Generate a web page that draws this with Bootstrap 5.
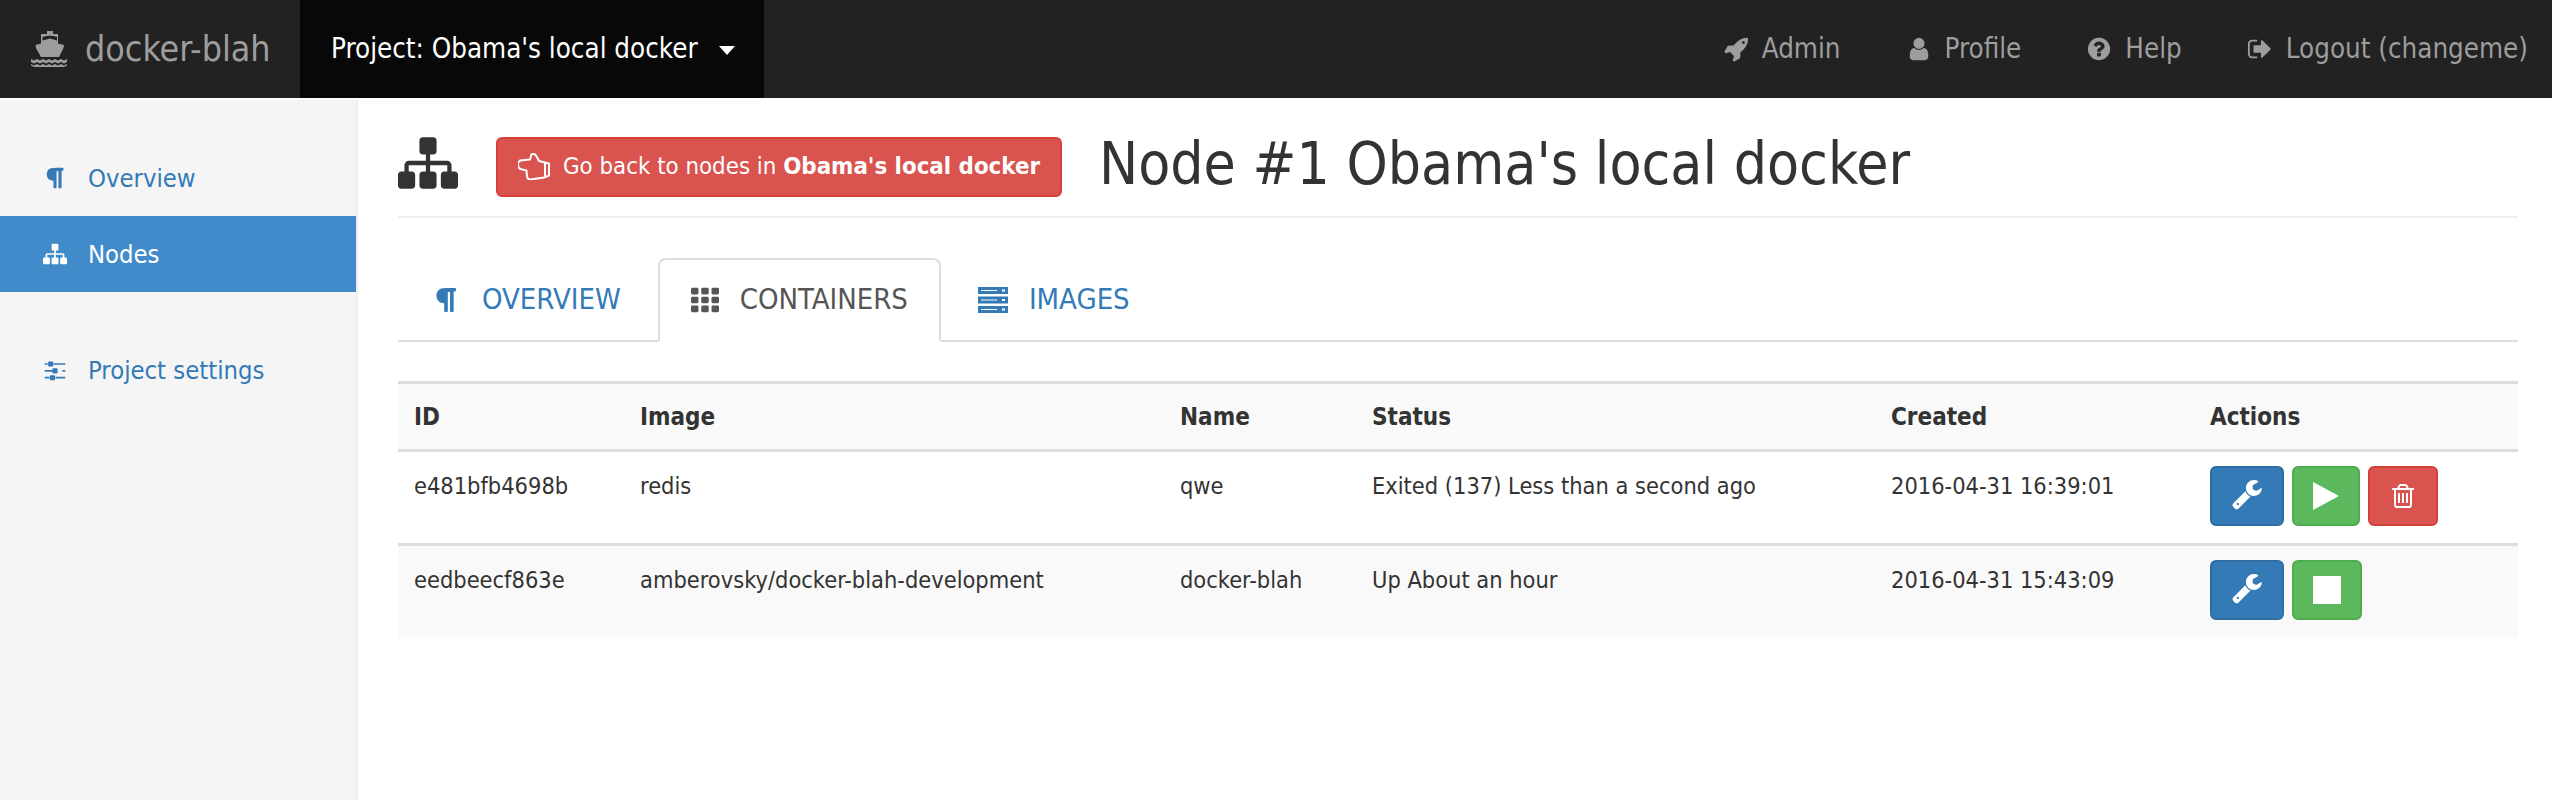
<!DOCTYPE html>
<html lang="en">
<head>
  <meta charset="UTF-8" />
  <title>docker-blah</title>
  <link href="https://cdn.jsdelivr.net/npm/bootstrap@5.3.3/dist/css/bootstrap.min.css" rel="stylesheet" />
  <style>
    body { font-family: "DejaVu Sans Condensed", "DejaVu Sans", Verdana, sans-serif; font-size: 23.4px; color: #333; background: #fff; }
    a { text-decoration: none; color: #337ab7; }
    svg { fill: currentColor; flex: none; }

    /* top bar */
    .topbar { height: 98px; background: #222; color: #9d9d9d; }
    .topbar a { color: #9d9d9d; }
    .brand-link { width: 300px; padding-left: 30px; font-size: 35.5px; gap: 15px; }
    .project-link { width: 464px; padding-left: 31px; background: #080808; font-size: 27.5px; }
    .topbar .project-link { color: #fff; }
    .project-caret { margin-left: 21px; border-top: 9px solid #fff; border-left: 8px solid transparent; border-right: 8px solid transparent; margin-top: 3px; }
    .top-links { gap: 65px; padding-right: 24px; font-size: 27.5px; }
    .top-links a { gap: 13px; }

    /* sidebar */
    .page-wrap { margin-top: 2px; min-height: 700px; }
    .side-col { width: 358px; background: #f5f5f5; border-right: 2px solid #eee; padding-top: 40px; }
    .side-item { height: 76px; padding-left: 43px; gap: 21px; font-size: 25.4px; }
    .side-item.is-current { background: #428bca; color: #fff; width: 356px; margin-right: -2px; }
    .side-gap { height: 40px; }

    /* content */
    .content-col { padding: 36px 34px 0 40px; min-width: 0; }
    .head-row { height: 82px; border-bottom: 2px solid #eee; padding-bottom: 19px; }
    .head-icon { margin-bottom: 8px; }
    .back-btn { background: #d9534f; border: 2px solid #d43f3a; border-radius: 6px; color: #fff; width: 566px; height: 60px; margin-left: 38px; gap: 12px; padding: 0 0 0 20px; font-size: 23.8px; white-space: nowrap; }
    .node-title { font-size: 58.3px; font-weight: 400; margin: 0 0 5px 37px; white-space: nowrap; line-height: 60px; }

    .tab-row { margin-top: 40px; height: 84px; border-bottom: 2px solid #ddd; margin-bottom: 39px; }
    .tab-link { height: 84px; padding: 0 31px; margin-right: 4px; gap: 21px; font-size: 29px; border: 2px solid transparent; border-radius: 8px 8px 0 0; }
    .tab-link.is-current { color: #555; background: #fff; border-color: #ddd #ddd #fff; }

    .node-table { width: 2120px; border-collapse: collapse; table-layout: fixed; }
    .node-table th, .node-table td { padding: 0 0 0 16px; border-top: 3px solid #ddd; vertical-align: top; }
    .node-table th { height: 68px; vertical-align: middle; font-size: 24px; font-weight: 700; background: #f9f9f9; }
    .node-table td { height: 94px; padding-top: 17px; }
    .node-table tbody tr:last-child td { height: 92px; background: #f9f9f9; }
    .act-btn { height: 60px; border-radius: 6px; border: 2px solid; color: #fff; padding: 0; margin-right: 8px; vertical-align: top; display: inline-flex; align-items: center; justify-content: center; }
    .act-tool { background: #337ab7; border-color: #2e6da4; width: 74px; }
    .act-run { background: #5cb85c; border-color: #4cae4c; width: 68px; }
    .act-stop { background: #5cb85c; border-color: #4cae4c; width: 70px; }
    .act-del { background: #d9534f; border-color: #d43f3a; width: 70px; }
    .node-table td.act-cell { padding-top: 14px; padding-left: 16px; }
  </style>
</head>
<body>

  <svg width="0" height="0" class="position-absolute">
    <defs>
      <symbol id="i-para" viewBox="0 0 1792 1792"><path d="M1534 189v73q0 29-18.500 61t-42.500 32q-50 0-54 1-26 6-32 31-3 11-3 64v1152q0 25-18 43t-43 18h-108q-25 0-43-18t-18-43v-1218h-143v1218q0 25-17.500 43t-43.500 18h-108q-26 0-43.500-18t-17.500-43v-496q-147-12-245-59-126-58-192-179-64-117-64-259 0-166 88-286 88-118 209-159 111-37 417-37h479q25 0 43 18t18 43z"/></symbol>
      <symbol id="i-sitemap" viewBox="0 0 1792 1792"><path d="M1792 1248v320q0 40-28 68t-68 28h-320q-40 0-68-28t-28-68v-320q0-40 28-68t68-28h96v-192h-512v192h96q40 0 68 28t28 68v320q0 40-28 68t-68 28h-320q-40 0-68-28t-28-68v-320q0-40 28-68t68-28h96v-192h-512v192h96q40 0 68 28t28 68v320q0 40-28 68t-68 28h-320q-40 0-68-28t-28-68v-320q0-40 28-68t68-28h96v-192q0-52 38-90t90-38h512v-192h-96q-40 0-68-28t-28-68v-320q0-40 28-68t68-28h320q40 0 68 28t28 68v320q0 40-28 68t-68 28h-96v192h512q52 0 90 38t38 90v192h96q40 0 68 28t28 68z"/></symbol>
      <symbol id="i-sliders" viewBox="0 0 1792 1792"><path d="M480 1408v128h-352v-128h352zm352-128q26 0 45 19t19 45v256q0 26-19 45t-45 19h-256q-26 0-45-19t-19-45v-256q0-26 19-45t45-19h256zm160-384v128h-864v-128h864zm-640-512v128h-224v-128h224zm1312 1024v128h-736v-128h736zm-960-1152q26 0 45 19t19 45v256q0 26-19 45t-45 19h-256q-26 0-45-19t-19-45v-256q0-26 19-45t45-19h256zm320 512q26 0 45 19t19 45v256q0 26-19 45t-45 19h-256q-26 0-45-19t-19-45v-256q0-26 19-45t45-19h256zm640 128v128h-224v-128h224zm0-512v128h-864v-128h864z"/></symbol>
      <symbol id="i-grid" viewBox="0 0 30 30"><rect x="0" y="2" width="8" height="7" rx="1.500"/><rect x="11" y="2" width="8" height="7" rx="1.500"/><rect x="22" y="2" width="8" height="7" rx="1.500"/><rect x="0" y="11.500" width="8" height="7" rx="1.500"/><rect x="11" y="11.500" width="8" height="7" rx="1.500"/><rect x="22" y="11.500" width="8" height="7" rx="1.500"/><rect x="0" y="21" width="8" height="7" rx="1.500"/><rect x="11" y="21" width="8" height="7" rx="1.500"/><rect x="22" y="21" width="8" height="7" rx="1.500"/></symbol>
      <symbol id="i-server" viewBox="0 0 30 26"><path fill-rule="evenodd" d="M0 0h30v7H0zM24 2.500v2h3v-2zM0 9.500h30v7H0zM24 12v2h3v-2zM0 19h30v7H0zM24 21.500v2h3v-2zM3 3v1h16V3zM3 12.500v1h16v-1zM3 22v1h16v-1z"/></symbol>
      <symbol id="i-wrench" viewBox="0 0 1664 1792"><path d="M384 1344q0-26-19-45t-45-19-45 19-19 45 19 45 45 19 45-19 19-45zm644-420l-682 682q-37 37-90 37-52 0-91-37l-106-108q-38-36-38-90 0-53 38-91l681-681q39 98 114.500 173.500t173.500 114.500zm634-435q0 39-23 106-47 134-164.500 217.500t-258.500 83.500q-185 0-316.500-131.500t-131.500-316.500 131.500-316.500 316.500-131.500q58 0 121.500 16.500t107.500 46.500q16 11 16 28t-16 28l-293 169v224l193 107q5-3 79-48.500t135.500-81 70.500-35.500q15 0 23.500 10t8.500 25z"/></symbol>
    </defs>
  </svg>

  <!-- Top bar -->
  <nav class="topbar d-flex align-items-stretch">
    <a class="brand-link d-flex align-items-center" href="#">
      <svg width="40" height="36" viewBox="0 0 40 36"><path fill-rule="evenodd" d="M17 0h6v3h5v9.500l6 1.500-.5 3-4.500 9H11L6 17l-.5-3 5.500-1.500V3h6zM12.500 6v3.500L20 7.500l7 2V6q-7-2.500-14.500 0z"/><path d="M1 28l3 1.500 3-1.500 3 1.500 3-1.500 3 1.500 3-1.500 3 1.500 3-1.500 3 1.500 3-1.500 3 1.500 3-1.500v3l-3 1.500-3-1.500-3 1.500-3-1.500-3 1.500-3-1.500-3 1.500-3-1.500-3 1.500-3-1.500-3 1.500-3-1.500zM1 33l3 1.500 3-1.500 3 1.500 3-1.500 3 1.500 3-1.500 3 1.500 3-1.500 3 1.500 3-1.500 3 1.500 3-1.500v1.500l-3 1.500H4l-3-1.500z"/></svg>
      <span>docker-blah</span>
    </a>
    <a class="project-link d-flex align-items-center text-nowrap" href="#">
      <span>Project: Obama's local docker</span><span class="project-caret"></span>
    </a>
    <div class="top-links d-flex align-items-center ms-auto text-nowrap">
      <a class="d-flex align-items-center" href="#">
        <svg width="26" height="26" viewBox="0 0 1792 1792"><path d="M1504 448q0-40-28-68t-68-28-68 28-28 68 28 68 68 28 68-28 28-68zm224-288q0 249-75.500 430.500t-253.500 360.500q-81 80-195 176l-20 379q-2 16-16 26l-384 224q-7 4-16 4-12 0-23-9l-64-64q-13-14-8-32l85-276-281-281-276 85q-3 1-9 1-14 0-23-9l-64-64q-17-19-5-39l224-384q10-14 26-16l379-20q96-114 176-195 188-187 358-258t431-71q14 0 24 9.500t10 22.500z"/></svg>
        <span>Admin</span>
      </a>
      <a class="d-flex align-items-center" href="#">
        <svg width="26" height="26" viewBox="0 0 1792 1792"><path d="M1536 1399q0 109-62.500 187t-150.500 78h-854q-88 0-150.500-78t-62.500-187q0-85 8.500-160.500t31.500-152 58.500-131 94-89 134.500-34.500q131 128 313 128t313-128q76 0 134.500 34.500t94 89 58.500 131 31.500 152 8.500 160.500zm-256-887q0 159-112.500 271.500t-271.500 112.500-271.500-112.500-112.500-271.500 112.500-271.500 271.500-112.500 271.500 112.500 112.500 271.500z"/></svg>
        <span>Profile</span>
      </a>
      <a class="d-flex align-items-center" href="#">
        <svg width="26" height="26" viewBox="0 0 1792 1792"><path d="M1024 1376v-192q0-14-9-23t-23-9h-192q-14 0-23 9t-9 23v192q0 14 9 23t23 9h192q14 0 23-9t9-23zm256-672q0-88-55.500-163t-138.500-116-170-41q-243 0-371 213-15 24 8 42l132 100q7 6 19 6 16 0 25-12 53-68 86-92 34-24 86-24 48 0 85.500 26t37.500 59q0 38-20 61t-68 45q-63 28-115.500 86.500t-52.500 125.500v36q0 14 9 23t23 9h192q14 0 23-9t9-23q0-19 21.500-49.500t54.500-49.500q32-18 49-28.500t46-35 44.500-48 28-60.500 12.500-81zm384 192q0 209-103 385.500t-279.500 279.500-385.500 103-385.500-103-279.500-279.500-103-385.500 103-385.500 279.500-279.500 385.500-103 385.500 103 279.500 279.500 103 385.500z"/></svg>
        <span>Help</span>
      </a>
      <a class="d-flex align-items-center" href="#">
        <svg width="26" height="26" viewBox="0 0 1792 1792"><path d="M704 1440q0 4 1 20t.5 26.500-3 23.500-10 19.500-20.500 6.500h-320q-119 0-203.500-84.500t-84.500-203.500v-704q0-119 84.500-203.500t203.500-84.500h320q13 0 22.500 9.500t9.500 22.500q0 4 1 20t.5 26.500-3 23.500-10 19.500-20.500 6.500h-320q-66 0-113 47t-47 113v704q0 66 47 113t113 47h312l11.500 1 11.500 3 8 5.500 7 9 2 13.500zm928-544q0 26-19 45l-544 544q-19 19-45 19t-45-19-19-45v-288h-448q-26 0-45-19t-19-45v-384q0-26 19-45t45-19h448v-288q0-26 19-45t45-19 45 19l544 544q19 19 19 45z"/></svg>
        <span>Logout (changeme)</span>
      </a>
    </div>
  </nav>

  <div class="page-wrap d-flex">
    <!-- Sidebar -->
    <div class="side-col flex-shrink-0">
      <a class="side-item d-flex align-items-center" href="#"><svg width="24" height="24"><use href="#i-para"/></svg>Overview</a>
      <a class="side-item is-current d-flex align-items-center" href="#"><svg width="24" height="24"><use href="#i-sitemap"/></svg>Nodes</a>
      <div class="side-gap"></div>
      <a class="side-item d-flex align-items-center" href="#"><svg width="24" height="24"><use href="#i-sliders"/></svg>Project settings</a>
    </div>

    <!-- Main -->
    <main class="content-col flex-grow-1">
      <div class="head-row d-flex align-items-center">
        <svg class="head-icon" width="60" height="60"><use href="#i-sitemap"/></svg>
        <a class="back-btn d-flex align-items-center" href="#">
          <svg width="33" height="27" viewBox="13 12 33 27" style="fill:none;stroke:#fff;stroke-width:2;stroke-linejoin:round"><path d="M15 19.500l10-1 1.500-5q3-1.500 4.500 1l3 5.500 10 2.500v12l-5 2-13.500 2q-3 0-3.500-3l-.5-6-6-1.500q-2.500-1-2.500-4.500 0-3 2-3.500z"/><path d="M40 22v13"/></svg>
          <span>Go back to nodes in <b>Obama's local docker</b></span>
        </a>
        <h1 class="node-title">Node #1 Obama's local docker</h1>
      </div>

      <div class="tab-row d-flex">
        <a class="tab-link d-flex align-items-center" href="#"><svg width="30" height="28"><use href="#i-para"/></svg>OVERVIEW</a>
        <a class="tab-link is-current d-flex align-items-center" href="#"><svg width="28" height="28"><use href="#i-grid"/></svg>CONTAINERS</a>
        <a class="tab-link d-flex align-items-center" href="#"><svg width="30" height="26"><use href="#i-server"/></svg>IMAGES</a>
      </div>

      <table class="node-table">
        <colgroup>
          <col style="width:226px"><col style="width:540px"><col style="width:192px"><col style="width:519px"><col style="width:319px"><col>
        </colgroup>
        <thead>
          <tr><th>ID</th><th>Image</th><th>Name</th><th>Status</th><th>Created</th><th>Actions</th></tr>
        </thead>
        <tbody>
          <tr>
            <td>e481bfb4698b</td><td>redis</td><td>qwe</td><td>Exited (137) Less than a second ago</td><td>2016-04-31 16:39:01</td>
            <td class="act-cell text-nowrap">
              <button class="act-btn act-tool"><svg width="32" height="32"><use href="#i-wrench"/></svg></button><button class="act-btn act-run"><svg width="28" height="30" viewBox="0 0 28 30"><path d="M1 1l26 14L1 29z"/></svg></button><button class="act-btn act-del"><svg width="28" height="30" viewBox="0 0 1792 1792"><path d="M704 736v576q0 14-9 23t-23 9h-64q-14 0-23-9t-9-23v-576q0-14 9-23t23-9h64q14 0 23 9t9 23zm256 0v576q0 14-9 23t-23 9h-64q-14 0-23-9t-9-23v-576q0-14 9-23t23-9h64q14 0 23 9t9 23zm256 0v576q0 14-9 23t-23 9h-64q-14 0-23-9t-9-23v-576q0-14 9-23t23-9h64q14 0 23 9t9 23zm128 724v-948h-896v948q0 22 7 40.500t14.500 27 10.500 8.500h832q3 0 10.500-8.500t14.500-27 7-40.500zm-672-1076h448l-48-117q-7-9-17-11h-317q-10 2-17 11zm928 32v64q0 14-9 23t-23 9h-96v948q0 83-47 143.500t-113 60.500h-832q-66 0-113-58.500t-47-141.500v-952h-96q-14 0-23-9t-9-23v-64q0-14 9-23t23-9h309l70-167q15-37 54-63t79-26h320q40 0 79 26t54 63l70 167h309q14 0 23 9t9 23z"/></svg></button>
            </td>
          </tr>
          <tr>
            <td>eedbeecf863e</td><td>amberovsky/docker-blah-development</td><td>docker-blah</td><td>Up About an hour</td><td>2016-04-31 15:43:09</td>
            <td class="act-cell text-nowrap">
              <button class="act-btn act-tool"><svg width="32" height="32"><use href="#i-wrench"/></svg></button><button class="act-btn act-stop"><svg width="28" height="28" viewBox="0 0 28 28"><path d="M0 0h28v28H0z"/></svg></button>
            </td>
          </tr>
        </tbody>
      </table>
    </main>
  </div>

  <script src="https://cdn.jsdelivr.net/npm/bootstrap@5.3.3/dist/js/bootstrap.bundle.min.js"></script>
</body>
</html>
